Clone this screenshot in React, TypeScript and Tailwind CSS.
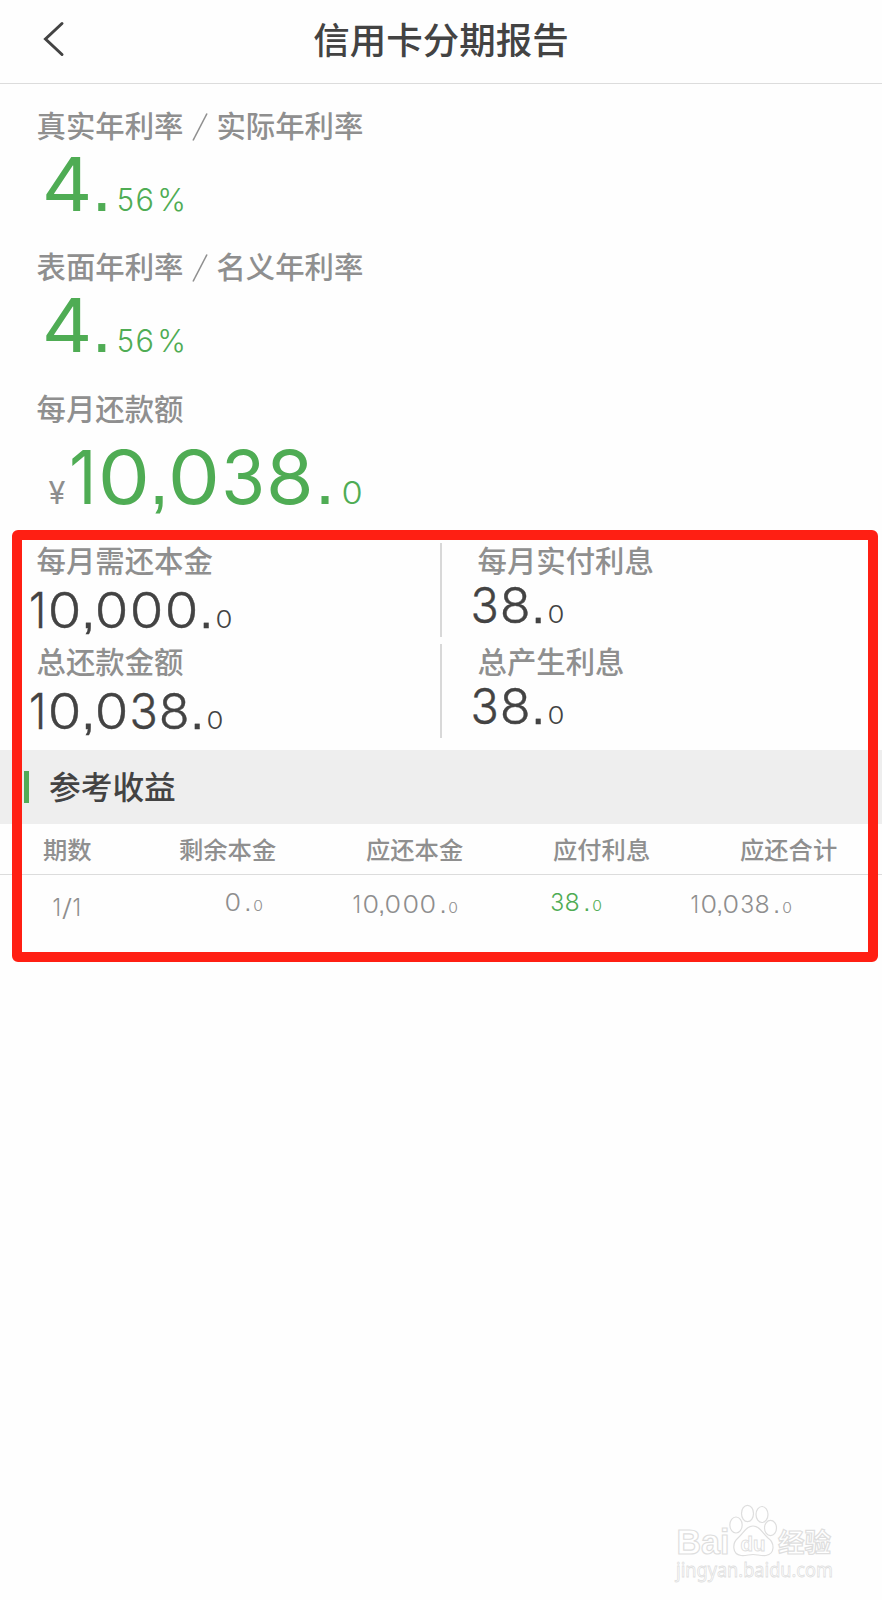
import clsx from "clsx";

const GREEN = "text-[#4fac54]";
const DARK = "text-[#434343]";
const GREY = "text-[#8e8e8e]";

// wide geometric figures: every glyph sits in its own em-based cell
const glyphCells: Record<string, string> = {
  "0": "w-[0.728em] scale-x-[1.12]",
  "1": "w-[0.4em] scale-x-90",
  "3": "w-[0.6em] scale-x-[0.96]",
  "4": "w-[0.68em] scale-x-[1.06]",
  "5": "w-[0.61em] scale-x-95",
  "6": "w-[0.66em]",
  "8": "w-[0.67em] scale-x-[1.04]",
  ",": "w-[0.22em] font-['Liberation_Sans',sans-serif]",
  ".": "w-[0.27em] font-['Liberation_Sans',sans-serif]",
  "/": "w-[0.42em] scale-x-125",
  "%": "w-[0.84em]",
};

function Figures({ text, className }: { text: string; className?: string }) {
  return (
    <span className={clsx("inline-flex items-baseline leading-none", className)}>
      {text.split("").map((char, i) => (
        <span key={i} className={clsx("inline-flex shrink-0 justify-center", glyphCells[char])}>
          {char}
        </span>
      ))}
    </span>
  );
}

function Label({ children }: { children: React.ReactNode }) {
  return (
    <div className="h-9 whitespace-nowrap pt-[3px] text-[29.4px] font-medium leading-9 text-[#8f8f8f]">{children}</div>
  );
}

function Rate({ left, right }: { left: string; right: string }) {
  return (
    <section className="h-[141.3px] pl-[36.5px]">
      <Label>
        <div className="flex">
          <span>{left}</span>
          <span className="flex w-[33px] items-center justify-center pl-px">
            <svg width="16" height="28" viewBox="0 0 16 28" fill="none" stroke="currentColor" strokeWidth="1.6">
              <path d="M1 27.5 15 0.5" />
            </svg>
          </span>
          <span>{right}</span>
        </div>
      </Label>
      <div className={clsx("mt-[5px] flex items-baseline pl-[5px]", GREEN)}>
        <Figures text="4." className="text-[74px]" />
        <Figures text="56" className="ml-1 text-[30.7px] font-light" />
        <Figures text="%" className="ml-1 text-[30.7px] font-light" />
      </div>
    </section>
  );
}

interface StatProps {
  label: string;
  value: string;
  raised?: boolean;
}

function Stat({ label, value, raised }: StatProps) {
  return (
    <div className="h-[100.5px]">
      <div className="pl-[36.5px]">
        <Label>{label}</Label>
      </div>
      <div className={clsx("flex items-baseline", DARK, raised ? "mt-[5px] pl-[29px]" : "mt-[10px] pl-[28px]")}>
        {/* thin stroke keeps the figures between light and regular */}
        <Figures text={value + "."} className="text-[48.6px] font-light [-webkit-text-stroke:0.4px_#434343]" />
        <Figures text="0" className="ml-[2px] text-[24.5px] font-light" />
      </div>
    </div>
  );
}

function Cell({ value, className }: { value: string; className?: string }) {
  return (
    <div className={clsx("flex items-baseline", className)}>
      <Figures text={value} className="text-2xl" />
      <Figures text="." className="ml-[3px] text-2xl" />
      <Figures text="0" className="ml-[2px] text-sm" />
    </div>
  );
}

function Watermark() {
  return (
    <svg
      className="absolute left-[670px] top-[1500px]"
      width="172"
      height="90"
      viewBox="0 0 172 90"
      fill="#fff"
      stroke="#dedede"
      strokeWidth="1.2"
      fontFamily="'Liberation Sans', 'Noto Sans CJK SC', sans-serif"
    >
      <text x="6.500" y="54" fontSize="35" fontWeight="700" textLength="53" lengthAdjust="spacingAndGlyphs">Bai</text>
      <ellipse cx="66" cy="25" rx="6.2" ry="8" />
      <ellipse cx="77.500" cy="13.500" rx="6" ry="8.200" />
      <ellipse cx="92" cy="14.500" rx="6" ry="8" />
      <ellipse cx="100.500" cy="28" rx="6" ry="7.700" />
      <path d="M83 26C76 26 74 33 68 38C62 43 62 54 71 55.500C76 56 79 54.500 83 54.500C87 54.500 91 56 96 55.500C105 54 105 43 98 38C92 33 90 26 83 26Z" />
      <text x="70.500" y="50.500" fontSize="21" fontWeight="700" strokeWidth="0.9" textLength="25" lengthAdjust="spacingAndGlyphs">du</text>
      <text x="108" y="52" fontSize="26.500" fontWeight="700">经验</text>
      <text x="6" y="77" fontSize="20" strokeWidth="0.8" fontFamily="'Noto Sans', sans-serif" textLength="157" lengthAdjust="spacingAndGlyphs">
        jingyan.baidu.com
      </text>
    </svg>
  );
}

export default function App() {
  return (
    <div className="relative h-[1600px] w-[882px] overflow-hidden bg-[#fefefe] font-[Inter,'Noto_Sans_CJK_SC',sans-serif]">
      <header className="relative flex h-[84px] items-center justify-center border-b border-[#dcdcdc]">
        <button className="absolute left-[42px] top-[20px]" aria-label="返回">
          <svg width="24" height="38" viewBox="0 0 24 38" fill="none" stroke="#434343" strokeWidth="3" strokeLinecap="round">
            <path d="M20 3.500 3.500 19 20 34.500" />
          </svg>
        </button>
        <h1 className={clsx("text-[36.5px] font-medium leading-none", DARK)}>信用卡分期报告</h1>
      </header>

      <main>
        <div className="h-[451px] pt-[22px]">
          <Rate left="真实年利率" right="实际年利率" />
          <Rate left="表面年利率" right="名义年利率" />
          <section className="pl-[36.5px]">
            <Label>每月还款额</Label>
            <div className={clsx("mt-[15px] flex items-baseline", GREEN)}>
              <span className={clsx("w-[31px] pl-[12px] text-[30.7px] leading-none", GREY)}>¥</span>
              <Figures text="10,038." className="text-[74px]" />
              <Figures text="0" className="ml-[6px] text-[30.7px] font-light" />
            </div>
          </section>
        </div>

        <div className="grid h-[215px] grid-cols-[440px_442px] content-start pt-[6px]">
          <Stat label="每月需还本金" value="10,000" />
          <div className="flex">
            <div className="mt-[2px] h-[94px] w-[2px] bg-[#d8d8d8]" />
            <div className="-ml-[1px]">
              <Stat label="每月实付利息" value="38" raised />
            </div>
          </div>
          <Stat label="总还款金额" value="10,038" />
          <div className="flex">
            <div className="mt-[2px] h-[94px] w-[2px] bg-[#d8d8d8]" />
            <div className="-ml-[1px]">
              <Stat label="总产生利息" value="38" raised />
            </div>
          </div>
        </div>

        <div className="flex h-[74px] items-center bg-[#eeeeee] pl-6">
          <div className="h-8 w-[5px] bg-[#52ac56]" />
          <h2 className={clsx("ml-5 pt-[2px] text-[31.7px] font-medium leading-none", DARK)}>参考收益</h2>
        </div>

        <div className="grid h-[51px] grid-cols-[179px_187px_187px_187px_1fr] border-b border-[#dcdcdc] pt-[2px] text-[24.3px] font-medium leading-[49px] text-[#8f8f8f]">
          <span className="pl-[43px]">期数</span>
          <span>剩余本金</span>
          <span>应还本金</span>
          <span>应付利息</span>
          <span>应还合计</span>
        </div>
        <div className={clsx("grid grid-cols-[224px_128px_198px_140px_1fr] font-light", GREY)}>
          <div className="pl-[52px] pt-[21px]">
            <Figures text="1/1" className="text-2xl" />
          </div>
          <Cell value="0" className="pt-4" />
          <Cell value="10,000" className="pt-[18px]" />
          <Cell value="38" className={clsx("pt-4", GREEN)} />
          <Cell value="10,038" className="pt-[18px]" />
        </div>
      </main>

      {/* highlight frame over the details */}
      <div className="pointer-events-none absolute left-[11.5px] top-[529.5px] h-[432px] w-[866px] rounded-md border-10 border-[#ff1f13]" />
      <Watermark />
    </div>
  );
}
